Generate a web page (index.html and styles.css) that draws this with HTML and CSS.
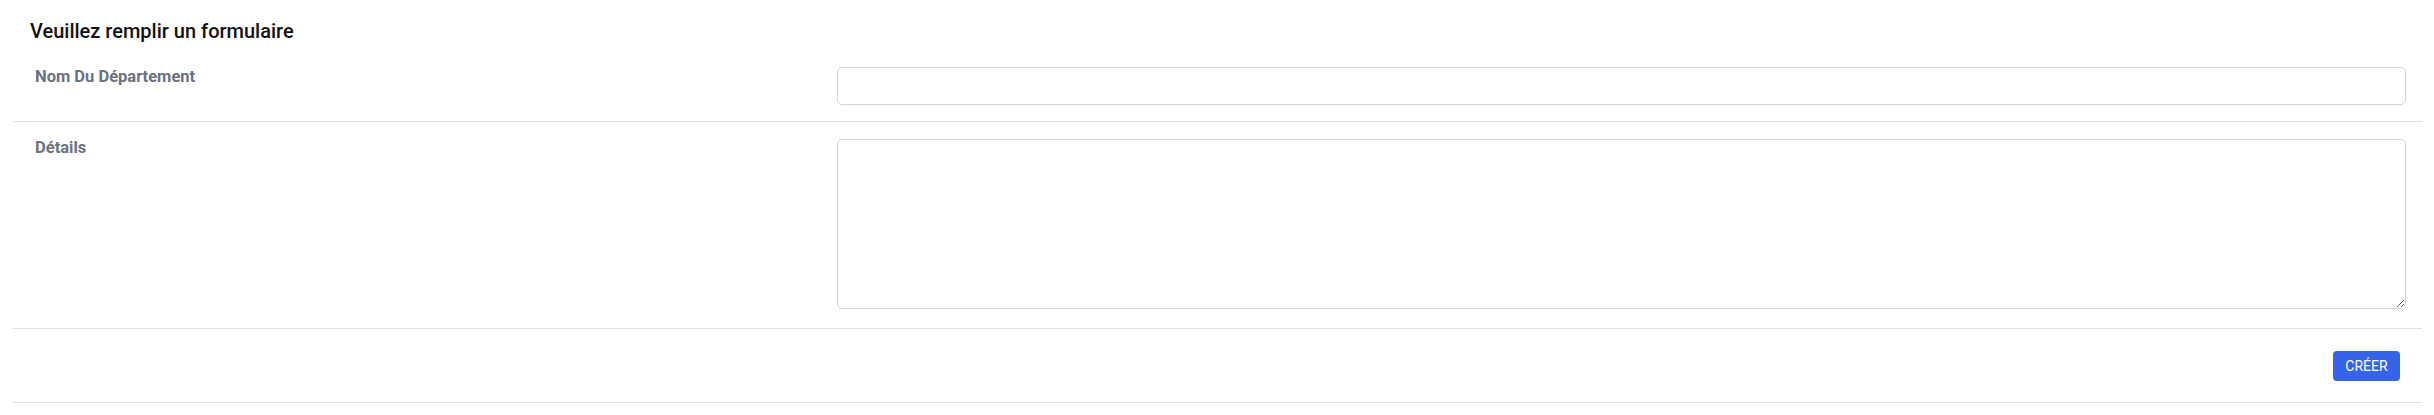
FILE: index.html
```html
<!DOCTYPE html>
<html lang="fr">
<head>
<meta charset="utf-8">
<title>Formulaire</title>
<link rel="stylesheet" href="styles.css">
</head>
<body>
<div class="panel">
  <h2 class="title">Veuillez remplir un formulaire</h2>
  <form class="form">
    <div class="row">
      <label class="label" for="nom">Nom Du Département</label>
      <div class="field"><input id="nom" class="input" type="text"></div>
    </div>
    <div class="row">
      <label class="label" for="details">Détails</label>
      <div class="field"><textarea id="details" class="textarea"></textarea></div>
    </div>
    <div class="actions">
      <button type="button" class="btn">CRÉER</button>
    </div>
  </form>
</div>
</body>
</html>
```
FILE: styles.css
```css
html, body {
  margin: 0;
  padding: 0;
  background: #ffffff;
}
body {
  font-family: Roboto, "Liberation Sans", Arial, sans-serif;
  color: #111827;
}
.panel {
  padding: 0 12px 0 13px;
}
.title {
  margin: 0;
  padding: 17px 17px 6px;
  font-size: 20px;
  line-height: 28px;
  font-weight: 500;
  color: #111111;
}
.form {
  margin: 0;
}
.row {
  display: grid;
  grid-template-columns: minmax(0, 1fr) minmax(0, 2fr);
  column-gap: 18px;
  padding: 16px 16px 16px 22px;
  border-bottom: 1px solid #e0e0e0;
}
.label {
  font-size: 16.5px;
  line-height: 20px;
  font-weight: 700;
  color: #6b7280;
}
.field {
  min-width: 0;
}
.input {
  display: block;
  box-sizing: border-box;
  width: 100%;
  height: 38px;
  margin: 0;
  border: 1px solid #d1d5db;
  border-radius: 5px;
  background: #fff;
  font: inherit;
}
.textarea {
  display: block;
  box-sizing: border-box;
  width: 100%;
  height: 170px;
  margin: 1px 0 3px;
  border: 1px solid #d1d5db;
  border-radius: 5px;
  background: #fff;
  font: inherit;
}
.actions {
  display: flex;
  justify-content: flex-end;
  padding: 22px 22px 21px;
  border-bottom: 1px solid #e0e0e0;
}
.btn {
  height: 30px;
  width: 67px;
  padding: 0;
  border: 0;
  border-radius: 4px;
  background: #3563e9;
  color: #ffffff;
  font-family: Roboto, "Liberation Sans", Arial, sans-serif;
  font-size: 14px;
  font-weight: 400;
}
```
